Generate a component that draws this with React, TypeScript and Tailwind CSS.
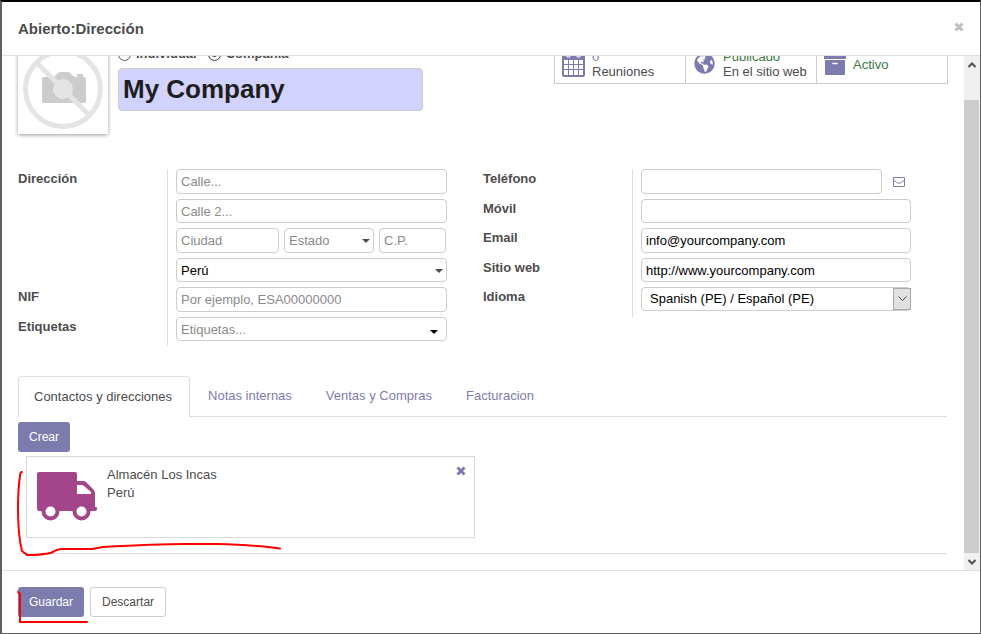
import type { ReactNode } from 'react';
import { FaGlobeAmericas } from 'react-icons/fa';

const box =
  'block h-full w-full min-w-0 rounded border border-[#ccc] bg-white px-1 text-[13px] leading-[18px] text-black placeholder:text-[#8a8a8a] outline-none';

const formRows = 'grid grid-rows-[25px_24px_25px_24px_25px_24px] gap-[5px]';
const contactRows = 'grid grid-rows-[25px_24px_25px_24px_25px] gap-[5px]';

function Caret({ className }: { className: string }) {
  return (
    <svg viewBox="0 0 8 4" className={`pointer-events-none absolute h-1 w-2 ${className}`} aria-hidden="true">
      <path d="M0 0h8L4 4z" fill="currentColor" />
    </svg>
  );
}

function Cross({ className }: { className: string }) {
  return (
    <svg viewBox="0 0 10 10" className={className} aria-hidden="true">
      <path d="M1.5 1.5l7 7M8.5 1.5l-7 7" stroke="currentColor" strokeWidth="3" fill="none" />
    </svg>
  );
}

function CalendarIcon() {
  return (
    <svg viewBox="0 0 23 26" className="h-[26px] w-[23px] shrink-0 text-[#7c7bad]" aria-hidden="true">
      <path d="M2 3h19a2 2 0 0 1 2 2V24a2 2 0 0 1-2 2H2a2 2 0 0 1-2-2V5A2 2 0 0 1 2 3z" fill="currentColor" />
      <path d="M5 0h3v6H5zM15 0h3v6h-3z" fill="currentColor" stroke="#fff" />
      <path
        d="M2 9h4v4H2zM7 9h4v4H7zM12 9h4v4h-4zM17 9h4v4h-4zM2 14h4v4H2zM7 14h4v4H7zM12 14h4v4h-4zM17 14h4v4h-4zM2 19h4v5H2zM7 19h4v5H7zM12 19h4v5h-4zM17 19h4v5h-4z"
        fill="#fff"
      />
    </svg>
  );
}

function ArchiveIcon() {
  return (
    <svg viewBox="0 0 22 22" className="h-[22px] w-[22px] shrink-0 text-[#7c7bad]" aria-hidden="true">
      <path d="M0 0h22v5H0zM1 6h20v14a1 1 0 0 1-1 1H2a1 1 0 0 1-1-1z" fill="currentColor" />
      <path d="M9 9.500h4" stroke="#fff" strokeWidth="1.500" strokeLinecap="round" />
    </svg>
  );
}

function CameraPlaceholder() {
  return (
    <svg viewBox="0 0 90 90" className="block size-[90px]" role="img" aria-label="Sin imagen">
      <path d="M26 33h10l4-4q1-1 3-1h6q2 0 3 1l3 3h1v1h3v-3h6v3h1q2 0 2 2v22q0 2-2 2H26q-2 0-2-2V35q0-2 2-2z" fill="#ccc" />
      <circle cx="45" cy="45" r="10" fill="#e4e4e4" />
      <circle cx="45" cy="45" r="37.500" fill="none" stroke="#e4e4e4" strokeWidth="5" />
      <path d="M19 19l52 52" stroke="#e4e4e4" strokeWidth="5" />
    </svg>
  );
}

function TruckIcon() {
  return (
    <svg viewBox="0 0 60 50" className="h-[50px] w-[60px] shrink-0" role="img" aria-label="Camión">
      <path
        fillRule="evenodd"
        d="M2 0H38a2 2 0 0 1 2 2V9h6q2 0 3 1l7 7q2 2 2 4v14h1a1 1 0 0 1 1 1v1a2 2 0 0 1-2 2H2a2 2 0 0 1-2-2V2a2 2 0 0 1 2-2zM40 13v9h14v-2l-7-6q-1-1-2-1z"
        fill="#a24689"
      />
      <circle cx="13.500" cy="39.500" r="7" fill="#fff" stroke="#a24689" strokeWidth="4" />
      <circle cx="44.500" cy="39.500" r="7" fill="#fff" stroke="#a24689" strokeWidth="4" />
    </svg>
  );
}

function Label({ htmlFor, children }: { htmlFor: string; children: ReactNode }) {
  return (
    <label htmlFor={htmlFor} className="block pt-px font-bold leading-[18px]">
      {children}
    </label>
  );
}

function Arrow({ up = false }: { up?: boolean }) {
  return (
    <svg viewBox="0 0 8 6" className="h-[6px] w-2" aria-hidden="true">
      <path d={up ? 'M.5 5L4 1.500 7.500 5' : 'M.5 1L4 4.500 7.500 1'} fill="none" stroke="#505050" strokeWidth="2" />
    </svg>
  );
}

const tabs = ['Notas internas', 'Ventas y Compras', 'Facturacion'];

export default function App() {
  return (
    <div className="relative flex h-screen flex-col overflow-hidden border-t-2 border-r border-b border-l-2 border-[#606060] border-t-black bg-white font-['Liberation_Sans',Arial,sans-serif] text-[13px] leading-[18px] text-[#4c4c4c]">
      <header className="flex h-[54px] shrink-0 items-center justify-between border-b border-[#e0e0e0] px-4">
        <h1 className="text-[15px] font-bold leading-5">Abierto:Dirección</h1>
        <button type="button" aria-label="Cerrar" className="-mt-1 text-[#bfbfbf]">
          <Cross className="size-[10px]" />
        </button>
      </header>

      <main className="flex min-h-0 flex-1">
        <div className="min-w-0 flex-1 overflow-hidden pr-[17px] pl-4">
          <section className="-mt-3 flex items-start">
            <div className="shrink-0 bg-white shadow-[0_1px_4px_rgba(0,0,0,0.4)]">
              <CameraPlaceholder />
            </div>
            <div className="ml-[10px] w-[305px] min-w-0">
              <div className="mb-1 flex h-5 items-center font-bold">
                <label className="flex items-center gap-[5px]">
                  <input type="radio" name="kind" className="size-[13px] appearance-none rounded-full border border-[#555]" />
                  Individual
                </label>
                <label className="ml-[11px] flex items-center gap-[5px]">
                  <input
                    type="radio"
                    name="kind"
                    defaultChecked
                    className="size-[13px] appearance-none rounded-full border border-[#555] bg-[#444] shadow-[inset_0_0_0_3px_white]"
                  />
                  Compañía
                </label>
              </div>
              <input
                aria-label="Nombre"
                defaultValue="My Company"
                className="block h-[43px] w-full rounded border border-[#ccc] bg-[#d2d2ff] px-1 text-[26px] font-bold leading-8 text-[#1e1e1e] outline-none"
              />
            </div>
            <div className="-mr-px ml-auto grid w-[394px] shrink-0 grid-cols-[131px_131px_1fr] border border-t-0 border-[#ccc]">
              <button type="button" className="flex h-[39px] items-center gap-[7px] border-r border-[#ccc] pl-[7px] text-left">
                <CalendarIcon />
                <span className="leading-[15px]">
                  <span className="block text-[#7c7bad]">0</span>
                  <span className="block">Reuniones</span>
                </span>
              </button>
              <button type="button" className="flex h-[39px] items-center gap-2 border-r border-[#ccc] pl-2 text-left">
                <FaGlobeAmericas className="size-[21px] shrink-0 text-[#7c7bad]" />
                <span className="leading-[15px] whitespace-nowrap">
                  <span className="block text-[#3c763d]">Publicado</span>
                  <span className="block">En el sitio web</span>
                </span>
              </button>
              <button type="button" className="flex h-[39px] items-center gap-[7px] pt-[2px] pl-[7px] text-left text-[#3c763d]">
                <ArchiveIcon />
                Activo
              </button>
            </div>
          </section>

          <section className="mt-[35px] flex items-start pr-9">
            <div className="grid w-[429px] grid-cols-[150px_1fr]">
              <div className={`border-r border-[#ddd] ${formRows}`}>
                <Label htmlFor="street">Dirección</Label>
                <div className="row-span-3" />
                <Label htmlFor="nif">NIF</Label>
                <Label htmlFor="tags">Etiquetas</Label>
              </div>
              <div className={`pb-[5px] pl-2 ${formRows}`}>
                <input id="street" placeholder="Calle..." className={box} />
                <input aria-label="Calle 2" placeholder="Calle 2..." className={box} />
                <div className="grid grid-cols-[103px_90px_67px] gap-[5px]">
                  <input aria-label="Ciudad" placeholder="Ciudad" className={box} />
                  <div className="relative">
                    <input aria-label="Estado" placeholder="Estado" className={box} />
                    <Caret className="top-[11px] right-1" />
                  </div>
                  <input aria-label="C.P." placeholder="C.P." className={box} />
                </div>
                <div className="relative">
                  <input aria-label="País" defaultValue="Perú" className={box} />
                  <Caret className="top-[11px] right-1" />
                </div>
                <input id="nif" placeholder="Por ejemplo, ESA00000000" className={box} />
                <div className="relative text-black">
                  <input id="tags" placeholder="Etiquetas..." className={box} />
                  <Caret className="top-[13px] right-[9px]" />
                </div>
              </div>
            </div>

            <div className="ml-9 grid flex-1 grid-cols-[150px_1fr]">
              <div className={`border-r border-[#ddd] ${contactRows}`}>
                <Label htmlFor="phone">Teléfono</Label>
                <Label htmlFor="mobile">Móvil</Label>
                <Label htmlFor="email">Email</Label>
                <Label htmlFor="site">Sitio web</Label>
                <Label htmlFor="lang">Idioma</Label>
              </div>
              <div className={`pb-[5px] pl-2 ${contactRows}`}>
                <div className="flex items-center">
                  <input id="phone" type="tel" className={box} />
                  <button type="button" aria-label="Enviar SMS" className="mr-[6px] ml-[11px] text-[#7c7bad]">
                    <svg viewBox="0 0 12 10" className="h-[10px] w-3" aria-hidden="true">
                      <path d="M.5.5h11v9H.5zM.5 3L4.500 6h3l4-3" fill="none" stroke="currentColor" />
                    </svg>
                  </button>
                </div>
                <input id="mobile" type="tel" className={box} />
                <input id="email" type="email" defaultValue="info@yourcompany.com" className={box} />
                <input id="site" type="url" defaultValue="http://www.yourcompany.com" className={box} />
                <div className="relative">
                  <select id="lang" className="block h-6 w-full appearance-none rounded border border-[#ccc] bg-white pl-2 text-black">
                    <option>Spanish (PE) / Español (PE)</option>
                  </select>
                  <span className="pointer-events-none absolute top-px right-0 flex h-[22px] w-[18px] items-center justify-center border border-[#aaa] bg-[#e1e1e1]">
                    <svg viewBox="0 0 9 6" className="h-[6px] w-[9px]" aria-hidden="true">
                      <path d="M.5.5l4 4 4-4" fill="none" stroke="#444" />
                    </svg>
                  </span>
                </div>
              </div>
            </div>
          </section>

          <nav className="mt-[30px] flex h-[41px] border-b border-[#ddd]" aria-label="Secciones">
            <button type="button" className="-mb-px rounded-t border border-b-0 border-[#ddd] bg-white pr-[17px] pl-[15px]">
              Contactos y direcciones
            </button>
            {tabs.map((tab) => (
              <button key={tab} type="button" className="ml-[2px] px-4 text-[#7c7bad]">
                {tab}
              </button>
            ))}
          </nav>

          <section className="border-b border-[#ddd] pt-[5px] pb-[15px]">
            <button type="button" className="block h-[30px] rounded-[3px] bg-[#7c7bad] px-[11px] text-[12px] text-white">
              Crear
            </button>
            <article className="mt-1 ml-2 flex h-[82px] w-[449px] items-start border border-[#d9d9d9] pt-[9px] pr-2 pl-[10px]">
              <div className="pt-[6px]">
                <TruckIcon />
              </div>
              <div className="ml-[10px] flex-1">
                <p>Almacén Los Incas</p>
                <p>Perú</p>
              </div>
              <button type="button" aria-label="Eliminar" className="text-[#7c7bad]">
                <Cross className="size-[10px]" />
              </button>
            </article>
          </section>
        </div>

        <div className="flex w-[16px] shrink-0 flex-col border-r border-[#f0f0f0] bg-[#f0f0f0]" aria-hidden="true">
          <div className="flex h-[44px] justify-center pt-[6px]">
            <Arrow up />
          </div>
          <div className="flex-1 bg-[#cdcdcd]" />
          <div className="flex h-[17px] items-center justify-center">
            <Arrow />
          </div>
        </div>
      </main>

      <footer className="flex h-[63px] shrink-0 items-center gap-[6px] border-t border-[#e0e0e0] px-4">
        <button type="button" className="h-[30px] rounded-[3px] bg-[#7c7bad] px-[11px] text-[12px] text-white">
          Guardar
        </button>
        <button type="button" className="h-[30px] rounded-[3px] border border-[#ccc] bg-white px-[11px] text-[12px]">
          Descartar
        </button>
      </footer>

      <svg viewBox="0 0 270 170" className="pointer-events-none absolute bottom-0 left-[14px] h-[170px] w-[270px]" aria-hidden="true">
        <g fill="none" stroke="#f00" strokeWidth="2" strokeLinecap="round" strokeLinejoin="round">
          <path d="M6 9Q4 9 4 13Q2 27 2 45Q2 73 6 88L11 92H19Q33 91 37 89Q40 86.500 46 86H76L87 84Q140 81 170 81H200Q240 82 264 85.500" />
          <path d="M2 129l2 2v28h67" />
        </g>
      </svg>
    </div>
  );
}
